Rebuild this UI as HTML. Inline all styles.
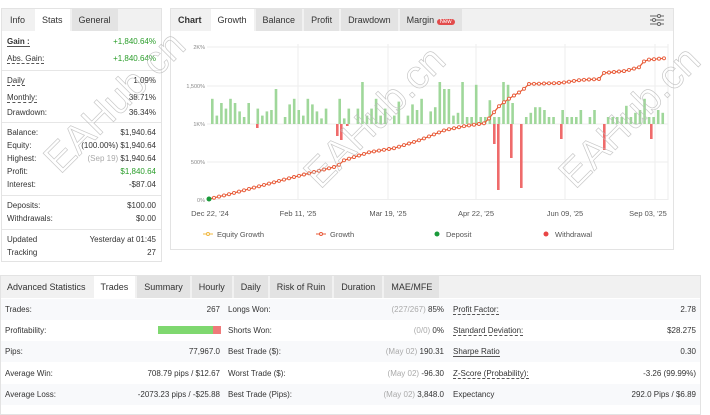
<!DOCTYPE html>
<html><head><meta charset="utf-8"><style>
*{box-sizing:border-box;margin:0;padding:0}
body{width:710px;height:407px;background:#fff;font-family:"Liberation Sans",sans-serif;color:#333;position:relative;overflow:hidden;font-size:8px}
.abs{position:absolute}
.panel{position:absolute;border:1px solid #e3e3e3;background:#fff}
.tabs{position:absolute;left:0;top:0;right:0;height:22px;background:#f1f1f1;display:flex}
.tab{height:22px;line-height:22px;padding:0 7px;font-size:9px;color:#333;margin-right:2px}
.tab.g{background:#e3e3e3}
.tab.a{background:#fff}
.row{position:absolute;left:5px;right:5px;font-size:8px;display:flex;justify-content:space-between}
.u{border-bottom:1px dashed #555}
.grn{color:#2a9d2a}
.div{position:absolute;left:0;right:0;height:1px;background:#e6e6e6}
.muted{color:#aaa}
.brow{position:absolute;left:0;right:0;height:21px;line-height:21px;font-size:8px}
.c{position:absolute;top:0;height:21px}
.wm{position:absolute;font-size:40px;color:transparent;-webkit-text-stroke:0.7px #bbb;transform:rotate(-45deg);opacity:.8}
</style></head><body>

<div class="panel" style="left:1px;top:8px;width:161px;height:254px">
 <div class="tabs"><div class="tab" style="padding:0 8px">Info</div><div class="tab a">Stats</div><div class="tab g">General</div></div>
 <div class="row" style="top:28px"><span class="u" style="font-weight:bold;border-bottom-style:double">Gain :</span><span class="grn">+1,840.64%</span></div>
 <div class="row" style="top:45px"><span class="u">Abs. Gain:</span><span class="grn">+1,840.64%</span></div>
 <div class="div" style="top:61px"></div>
 <div class="row" style="top:67px"><span class="u">Daily</span><span>1.09%</span></div>
 <div class="row" style="top:84px"><span class="u">Monthly:</span><span>38.71%</span></div>
 <div class="row" style="top:99px"><span>Drawdown:</span><span>36.34%</span></div>
 <div class="div" style="top:113px"></div>
 <div class="row" style="top:119px"><span>Balance:</span><span>$1,940.64</span></div>
 <div class="row" style="top:132px"><span>Equity:</span><span>(100.00%) $1,940.64</span></div>
 <div class="row" style="top:145px"><span>Highest:</span><span><span class="muted">(Sep 19)</span> $1,940.64</span></div>
 <div class="row" style="top:158px"><span>Profit:</span><span class="grn">$1,840.64</span></div>
 <div class="row" style="top:171px"><span>Interest:</span><span>-$87.04</span></div>
 <div class="div" style="top:186px"></div>
 <div class="row" style="top:192px"><span>Deposits:</span><span>$100.00</span></div>
 <div class="row" style="top:205px"><span>Withdrawals:</span><span>$0.00</span></div>
 <div class="div" style="top:220px"></div>
 <div class="row" style="top:226px"><span>Updated</span><span>Yesterday at 01:45</span></div>
 <div class="row" style="top:239px"><span>Tracking</span><span>27</span></div>
</div>

<div class="panel" style="left:170px;top:8px;width:504px;height:242px">
 <div class="tabs"><div class="tab" style="font-weight:bold">Chart</div><div class="tab a">Growth</div><div class="tab g">Balance</div><div class="tab g">Profit</div><div class="tab g">Drawdown</div><div class="tab g">Margin <span style="background:#e24b4b;color:#fff;font-size:6px;border-radius:5px;padding:0 3px;">New</span></div></div>
 <svg class="abs" style="right:8px;top:4px" width="16" height="14" viewBox="0 0 16 14" fill="none" stroke="#666" stroke-width="1"><path d="M1 3h14M1 7h14M1 11h14"/><circle cx="10" cy="3" r="1.5" fill="#fff"/><circle cx="5" cy="7" r="1.5" fill="#fff"/><circle cx="10" cy="11" r="1.5" fill="#fff"/></svg>
</div>
<svg class="abs" style="left:0;top:0" width="710" height="260">
 <g font-size="5.5" fill="#888" text-anchor="end" font-family="Liberation Sans">
  <text x="205" y="49">2K%</text><text x="205" y="88">1,500%</text><text x="205" y="126">1K%</text><text x="205" y="164">500%</text><text x="205" y="202">0%</text>
 </g>
 <g stroke="#eee" stroke-width="1">
  <path d="M207 47H668M207 86H668M207 124H668M207 162H668M207 199.5H668"/>
  <path d="M298 44V200M388 44V200M476 44V200M565 44V200M655 44V200M668 44V200"/>
 </g>
 <g id="bars"></g>
 <g id="line"></g>
 <circle cx="209" cy="199" r="2.5" fill="#1a9a3a"/>
 <g font-size="7.5" fill="#555" text-anchor="middle" font-family="Liberation Sans">
  <text x="210" y="216">Dec 22, '24</text><text x="298" y="216">Feb 11, '25</text><text x="388" y="216">Mar 19, '25</text><text x="476" y="216">Apr 22, '25</text><text x="565" y="216">Jun 09, '25</text><text x="648" y="216">Sep 03, '25</text>
 </g>
 <g font-size="7.5" fill="#555" font-family="Liberation Sans">
  <path d="M203 234h10" stroke="#f0b840"/><circle cx="208" cy="234" r="1.5" fill="#fff" stroke="#f0b840"/><text x="217" y="237">Equity Growth</text>
  <path d="M316 234h10" stroke="#e85b3a"/><circle cx="321" cy="234" r="1.5" fill="#fff" stroke="#e85b3a"/><text x="330" y="237">Growth</text>
  <circle cx="437" cy="234" r="2.5" fill="#1a9a3a"/><text x="446" y="237">Deposit</text>
  <circle cx="546" cy="234" r="2.5" fill="#e84545"/><text x="555" y="237">Withdrawal</text>
 </g>
</svg>

<div class="panel" style="left:0;top:275px;width:701px;height:140px">
 <div class="tabs"><div class="tab" style="padding:0 6px">Advanced Statistics</div><div class="tab a">Trades</div><div class="tab g">Summary</div><div class="tab g">Hourly</div><div class="tab g">Daily</div><div class="tab g">Risk of Ruin</div><div class="tab g">Duration</div><div class="tab g">MAE/MFE</div></div>
 <div class="brow" style="top:23px;background:#f8f9fb"><span class="c" style="left:4px">Trades:</span><span class="c" style="right:480px">267</span><span class="c" style="left:227px">Longs Won:</span><span class="c" style="right:256px"><span class="muted">(227/267)</span> 85%</span><span class="c" style="left:452px"><span class="u">Profit Factor:</span></span><span class="c" style="right:4px">2.78</span></div>
 <div class="brow" style="top:44px"><span class="c" style="left:4px">Profitability:</span><span class="c" style="left:157px;top:6px;height:8px;width:55px;background:#7fd86f"></span><span class="c" style="left:212px;top:6px;height:8px;width:8px;background:#ef7a7a"></span><span class="c" style="left:227px">Shorts Won:</span><span class="c" style="right:256px"><span class="muted">(0/0)</span> 0%</span><span class="c" style="left:452px"><span class="u">Standard Deviation:</span></span><span class="c" style="right:4px">$28.275</span></div>
 <div class="brow" style="top:65px;background:#f8f9fb"><span class="c" style="left:4px">Pips:</span><span class="c" style="right:480px">77,967.0</span><span class="c" style="left:227px">Best Trade ($):</span><span class="c" style="right:256px"><span class="muted">(May 02)</span> 190.31</span><span class="c" style="left:452px"><span class="u" style="border-bottom-style:solid">Sharpe Ratio</span></span><span class="c" style="right:4px">0.30</span></div>
 <div class="brow" style="top:87px"><span class="c" style="left:4px">Average Win:</span><span class="c" style="right:480px">708.79 pips / $12.67</span><span class="c" style="left:227px">Worst Trade ($):</span><span class="c" style="right:256px"><span class="muted">(May 02)</span> -96.30</span><span class="c" style="left:452px"><span class="u">Z-Score (Probability):</span></span><span class="c" style="right:4px">-3.26 (99.99%)</span></div>
 <div class="brow" style="top:108px;background:#f8f9fb"><span class="c" style="left:4px">Average Loss:</span><span class="c" style="right:480px">-2073.23 pips / -$25.88</span><span class="c" style="left:227px">Best Trade (Pips):</span><span class="c" style="right:256px"><span class="muted">(May 02)</span> 3,848.0</span><span class="c" style="left:452px">Expectancy</span><span class="c" style="right:4px">292.0 Pips / $6.89</span></div>
</div>

<script>
var up=[18,6,15,11,18,15,9,5,15,0,11,6,9,10,25,0,5,14,18,10,6,18,14,9,4,11,0,0,18,4,11,0,11,30,6,11,18,6,11,0,6,16,0,6,14,10,18,0,9,12,30,25,25,6,8,30,5,5,28,5,5,17,5,5,30,28,15,0,0,5,8,12,12,10,5,5,0,10,5,5,5,10,0,5,10,0,0,5,5,5,5,13,5,8,10,18,5,5,10,8];
var s="";
for(var i=0;i<up.length;i++){var x=211+i*4.55,h=up[i]*1.4;
 if(h>0)s+='<rect x="'+x+'" y="'+(124-h)+'" width="2.6" height="'+h+'" fill="#9fd79a"/>';}
[[256,4],[336,12],[340,16],[346,2],[493,20],[497,66],[510,34],[520,64],[560,15],[603,26],[650,15]].forEach(function(p){s+='<rect x="'+p[0]+'" y="124" width="2.6" height="'+p[1]+'" fill="#ef6b6b"/>';});
document.getElementById('bars').innerHTML=s;
var pts=[[209,199],[230,194],[260,186],[290,178],[310,173],[330,168],[338,166],[342,161],[348,159],[370,152],[395,148],[420,140],[445,130],[465,126],[486,123],[490,117],[500,105],[510,98],[523,90],[528,84],[560,83],[580,80],[600,79],[603,73],[625,71],[640,67],[645,60],[667,58]];
function yAt(x){for(var i=1;i<pts.length;i++){if(x<=pts[i][0]){var a=pts[i-1],b=pts[i];return a[1]+(b[1]-a[1])*(x-a[0])/(b[0]-a[0]);}}return 58;}
var t="",pd="M";
for(var x=209;x<=667;x+=5){pd+=x+" "+yAt(x).toFixed(1)+" L";}
pd=pd.slice(0,-2);
t+='<path d="'+pd+'" fill="none" stroke="#f0b840" stroke-width="1"/>';
t+='<path d="'+pd+'" fill="none" stroke="#e85b3a" stroke-width="1.2"/>';
for(var x=214;x<=667;x+=5){t+='<circle cx="'+x+'" cy="'+yAt(x).toFixed(1)+'" r="1.5" fill="#fff" stroke="#e85b3a" stroke-width="0.9"/>';}
document.getElementById('line').innerHTML=t;
</script>

<div class="wm" style="left:25px;top:80px">EAHub.cn</div>
<div class="wm" style="left:285px;top:95px">EAHub.cn</div>
<div class="wm" style="left:540px;top:95px">EAHub.cn</div>
</body></html>
